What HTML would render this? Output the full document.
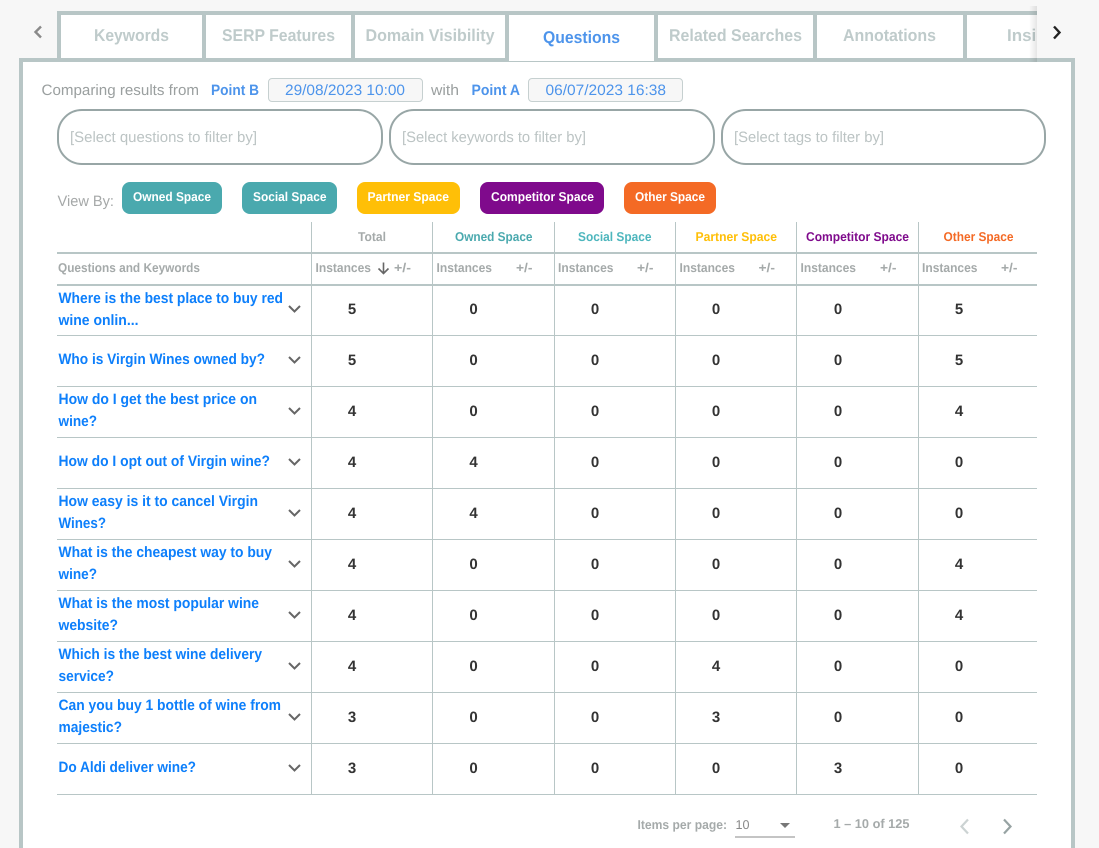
<!DOCTYPE html>
<html><head><meta charset="utf-8"><title>Questions</title>
<style>
html,body{margin:0;padding:0;background:#f7f7f7;width:1099px;height:848px;overflow:hidden}
svg{display:block}
text{font-family:"Liberation Sans",sans-serif;text-rendering:geometricPrecision}
.tab{font-size:17px;font-weight:700;fill:#bfcbcb}
.c{font-size:15px;fill:#9a9f9f}
.b{font-size:15px;font-weight:700;fill:#4d94eb}
.d{font-size:15px;fill:#4d94eb}
.p{font-size:15px;fill:#bcc4c4}
.w{font-size:12.800px;font-weight:700;fill:#fff}
.h{font-size:12.800px;font-weight:700}
.s{font-size:12.800px;font-weight:700;fill:#a5aaaa}
.q{font-size:15px;font-weight:700;fill:#0d7ffb}
.n{font-size:15px;font-weight:700;fill:#333;text-anchor:middle}
.g{font-size:12.800px;font-weight:700;fill:#a5aaaa}
.ln{stroke:#b8c6c6;fill:none}
.ch{stroke:#666;stroke-width:2;fill:none}
</style></head><body>
<svg xmlns="http://www.w3.org/2000/svg" width="1099" height="848" viewBox="0 0 1099 848">
<defs>
<clipPath id="tc"><rect x="57" y="0" width="980" height="62"/></clipPath>
<linearGradient id="sh" x1="0" x2="1" y1="0" y2="0"><stop offset="0" stop-color="#000" stop-opacity="0"/><stop offset="1" stop-color="#000" stop-opacity=".1"/></linearGradient>
</defs>
<rect width="1099" height="848" fill="#f7f7f7"/>
<!-- panel -->
<rect x="21" y="60" width="1052" height="800" fill="#fff" stroke="#b8c6c6" stroke-width="4"/>
<!-- tabs -->
<g clip-path="url(#tc)">
<rect x="57" y="11" width="1020" height="50" fill="#fff"/>
<rect x="57" y="11" width="1020" height="4" fill="#b8c6c6"/>
<rect x="57" y="58" width="452" height="4" fill="#b8c6c6"/>
<rect x="654" y="58" width="420" height="4" fill="#b8c6c6"/>
<rect x="57" y="11" width="4" height="50" fill="#b8c6c6"/>
<rect x="202" y="11" width="4" height="50" fill="#b8c6c6"/>
<rect x="351" y="11" width="4" height="50" fill="#b8c6c6"/>
<rect x="505" y="11" width="4" height="50" fill="#b8c6c6"/>
<rect x="654" y="11" width="4" height="50" fill="#b8c6c6"/>
<rect x="813" y="11" width="4" height="50" fill="#b8c6c6"/>
<rect x="963" y="11" width="4" height="50" fill="#b8c6c6"/>
<text class="tab" x="94" y="41" textLength="75" lengthAdjust="spacingAndGlyphs">Keywords</text>
<text class="tab" x="222" y="41" textLength="113" lengthAdjust="spacingAndGlyphs">SERP Features</text>
<text class="tab" x="365.500" y="41" textLength="129" lengthAdjust="spacingAndGlyphs">Domain Visibility</text>
<text class="tab" x="543" y="43" textLength="77" lengthAdjust="spacingAndGlyphs" style="fill:#4d94eb">Questions</text>
<text class="tab" x="669" y="41" textLength="133" lengthAdjust="spacingAndGlyphs">Related Searches</text>
<text class="tab" x="843" y="41" textLength="93" lengthAdjust="spacingAndGlyphs">Annotations</text>
<text class="tab" x="1007" y="41" textLength="65" lengthAdjust="spacingAndGlyphs">Insights</text>
<rect x="1029" y="6" width="8" height="56" fill="url(#sh)"/>
</g>
<rect x="1037" y="6" width="62" height="52" fill="#f7f7f7"/>
<path d="M41 26.500 L35.500 32 L41 37.500" fill="none" stroke="#8a8a8a" stroke-width="2.400"/>
<path d="M1054 26.500 L1059.500 32.500 L1054 38.500" fill="none" stroke="#222" stroke-width="2.400"/>

<!-- comparing row -->
<text class="c" x="41.500" y="95" textLength="157.500" lengthAdjust="spacingAndGlyphs">Comparing results from</text>
<text class="b" x="211" y="95" textLength="48" lengthAdjust="spacingAndGlyphs">Point B</text>
<rect x="268.500" y="78.500" width="154" height="23" rx="3.500" fill="#f7f7f7" stroke="#c6d0d0"/>
<text class="d" x="285" y="95" textLength="120" lengthAdjust="spacingAndGlyphs">29/08/2023 10:00</text>
<text class="c" x="431" y="95" textLength="28" lengthAdjust="spacingAndGlyphs">with</text>
<text class="b" x="471.500" y="95" textLength="48.500" lengthAdjust="spacingAndGlyphs">Point A</text>
<rect x="528.500" y="78.500" width="154" height="23" rx="3.500" fill="#f7f7f7" stroke="#c6d0d0"/>
<text class="d" x="545.500" y="95" textLength="120.500" lengthAdjust="spacingAndGlyphs">06/07/2023 16:38</text>

<!-- filters -->
<rect x="58" y="110" width="324" height="54" rx="24" fill="#fff" stroke="#98a6a6" stroke-width="2"/>
<rect x="390" y="110" width="324" height="54" rx="24" fill="#fff" stroke="#98a6a6" stroke-width="2"/>
<rect x="722" y="110" width="323" height="54" rx="24" fill="#fff" stroke="#98a6a6" stroke-width="2"/>
<text class="p" x="70" y="142" textLength="187" lengthAdjust="spacingAndGlyphs">[Select questions to filter by]</text>
<text class="p" x="402" y="142" textLength="184" lengthAdjust="spacingAndGlyphs">[Select keywords to filter by]</text>
<text class="p" x="734" y="142" textLength="150" lengthAdjust="spacingAndGlyphs">[Select tags to filter by]</text>

<!-- view by -->
<text class="c" x="57.500" y="206" textLength="56.500" lengthAdjust="spacingAndGlyphs" style="fill:#a5a8a8">View By:</text>
<rect x="122" y="182" width="100" height="32" rx="8" fill="#4aa9ae"/>
<rect x="242" y="182" width="95" height="32" rx="8" fill="#4aa9ae"/>
<rect x="357" y="182" width="103" height="32" rx="8" fill="#ffbf07"/>
<rect x="480" y="182" width="124" height="32" rx="8" fill="#7f0a8c"/>
<rect x="624" y="182" width="92" height="32" rx="8" fill="#f46a25"/>
<text class="w" x="133" y="201" textLength="78" lengthAdjust="spacingAndGlyphs">Owned Space</text>
<text class="w" x="253" y="201" textLength="73.500" lengthAdjust="spacingAndGlyphs">Social Space</text>
<text class="w" x="367.500" y="201" textLength="81.500" lengthAdjust="spacingAndGlyphs">Partner Space</text>
<text class="w" x="491" y="201" textLength="103" lengthAdjust="spacingAndGlyphs">Competitor Space</text>
<text class="w" x="635" y="201" textLength="70" lengthAdjust="spacingAndGlyphs">Other Space</text>

<!-- table grid -->
<g class="ln">
<path d="M311.500 222V795M432.500 222V795M554.500 222V795M675.500 222V795M796.500 222V795M918.500 222V795"/>
<path stroke-width="2" d="M57 253H1037M57 285H1037"/>
<path d="M57 335.500H1037M57 386.500H1037M57 437.500H1037M57 488.500H1037M57 539.500H1037M57 590.500H1037M57 641.500H1037M57 692.500H1037M57 743.500H1037M57 794.500H1037"/>
</g>

<!-- header -->
<text class="h" x="358" y="241" textLength="28" lengthAdjust="spacingAndGlyphs" style="fill:#a5aaaa">Total</text>
<text class="h" x="455" y="241" textLength="77.500" lengthAdjust="spacingAndGlyphs" style="fill:#4aa9ae">Owned Space</text>
<text class="h" x="578" y="241" textLength="73.500" lengthAdjust="spacingAndGlyphs" style="fill:#4db6bd">Social Space</text>
<text class="h" x="695.500" y="241" textLength="81.500" lengthAdjust="spacingAndGlyphs" style="fill:#ffbf07">Partner Space</text>
<text class="h" x="806" y="241" textLength="103" lengthAdjust="spacingAndGlyphs" style="fill:#7f0a8c">Competitor Space</text>
<text class="h" x="943.500" y="241" textLength="70" lengthAdjust="spacingAndGlyphs" style="fill:#f46a25">Other Space</text>

<text class="s" x="58" y="272" textLength="142" lengthAdjust="spacingAndGlyphs">Questions and Keywords</text>
<text class="s" x="315.500" y="272" textLength="55.500" lengthAdjust="spacingAndGlyphs">Instances</text>
<path d="M383.500 262.500V273.500M378.500 268.500L383.500 273.500L388.500 268.500" fill="none" stroke="#666" stroke-width="1.600"/>
<text class="s" x="394" y="272" textLength="17" lengthAdjust="spacingAndGlyphs">+/-</text>
<text class="s" x="436.500" y="272" textLength="55.500" lengthAdjust="spacingAndGlyphs">Instances</text>
<text class="s" x="516" y="272" textLength="16.500" lengthAdjust="spacingAndGlyphs">+/-</text>
<text class="s" x="558" y="272" textLength="55.500" lengthAdjust="spacingAndGlyphs">Instances</text>
<text class="s" x="637" y="272" textLength="16.500" lengthAdjust="spacingAndGlyphs">+/-</text>
<text class="s" x="679.500" y="272" textLength="55.500" lengthAdjust="spacingAndGlyphs">Instances</text>
<text class="s" x="758.500" y="272" textLength="16.500" lengthAdjust="spacingAndGlyphs">+/-</text>
<text class="s" x="800.500" y="272" textLength="55.500" lengthAdjust="spacingAndGlyphs">Instances</text>
<text class="s" x="880" y="272" textLength="16.500" lengthAdjust="spacingAndGlyphs">+/-</text>
<text class="s" x="922" y="272" textLength="55.500" lengthAdjust="spacingAndGlyphs">Instances</text>
<text class="s" x="1001" y="272" textLength="16.500" lengthAdjust="spacingAndGlyphs">+/-</text>

<!-- questions -->
<text class="q" x="58.500" y="303" textLength="224.500" lengthAdjust="spacingAndGlyphs">Where is the best place to buy red</text>
<text class="q" x="58.500" y="325" textLength="80" lengthAdjust="spacingAndGlyphs">wine onlin...</text>
<text class="q" x="58.500" y="364" textLength="206.500" lengthAdjust="spacingAndGlyphs">Who is Virgin Wines owned by?</text>
<text class="q" x="58.500" y="404" textLength="198.500" lengthAdjust="spacingAndGlyphs">How do I get the best price on</text>
<text class="q" x="58.500" y="426" textLength="38.500" lengthAdjust="spacingAndGlyphs">wine?</text>
<text class="q" x="58.500" y="466" textLength="211.500" lengthAdjust="spacingAndGlyphs">How do I opt out of Virgin wine?</text>
<text class="q" x="58.500" y="506" textLength="199.500" lengthAdjust="spacingAndGlyphs">How easy is it to cancel Virgin</text>
<text class="q" x="58.500" y="528" textLength="47.500" lengthAdjust="spacingAndGlyphs">Wines?</text>
<text class="q" x="58.500" y="557" textLength="213.500" lengthAdjust="spacingAndGlyphs">What is the cheapest way to buy</text>
<text class="q" x="58.500" y="579" textLength="38.500" lengthAdjust="spacingAndGlyphs">wine?</text>
<text class="q" x="58.500" y="608" textLength="200.500" lengthAdjust="spacingAndGlyphs">What is the most popular wine</text>
<text class="q" x="58.500" y="630" textLength="59.500" lengthAdjust="spacingAndGlyphs">website?</text>
<text class="q" x="58.500" y="659" textLength="203.500" lengthAdjust="spacingAndGlyphs">Which is the best wine delivery</text>
<text class="q" x="58.500" y="681" textLength="55.500" lengthAdjust="spacingAndGlyphs">service?</text>
<text class="q" x="58.500" y="710" textLength="222.500" lengthAdjust="spacingAndGlyphs">Can you buy 1 bottle of wine from</text>
<text class="q" x="58.500" y="732" textLength="63.500" lengthAdjust="spacingAndGlyphs">majestic?</text>
<text class="q" x="58.500" y="772" textLength="137.500" lengthAdjust="spacingAndGlyphs">Do Aldi deliver wine?</text>

<!-- row chevrons -->
<g class="ch">
<path d="M289 306L294.500 311.500L300 306"/>
<path d="M289 357L294.500 362.500L300 357"/>
<path d="M289 408L294.500 413.500L300 408"/>
<path d="M289 459L294.500 464.500L300 459"/>
<path d="M289 510L294.500 515.500L300 510"/>
<path d="M289 561L294.500 566.500L300 561"/>
<path d="M289 612L294.500 617.500L300 612"/>
<path d="M289 663L294.500 668.500L300 663"/>
<path d="M289 714L294.500 719.500L300 714"/>
<path d="M289 765L294.500 770.500L300 765"/>
</g>

<!-- numbers -->
<g>
<text class="n" x="352" y="314">5</text><text class="n" x="473.500" y="314">0</text><text class="n" x="595" y="314">0</text><text class="n" x="716" y="314">0</text><text class="n" x="838" y="314">0</text><text class="n" x="959" y="314">5</text>
<text class="n" x="352" y="365">5</text><text class="n" x="473.500" y="365">0</text><text class="n" x="595" y="365">0</text><text class="n" x="716" y="365">0</text><text class="n" x="838" y="365">0</text><text class="n" x="959" y="365">5</text>
<text class="n" x="352" y="416">4</text><text class="n" x="473.500" y="416">0</text><text class="n" x="595" y="416">0</text><text class="n" x="716" y="416">0</text><text class="n" x="838" y="416">0</text><text class="n" x="959" y="416">4</text>
<text class="n" x="352" y="467">4</text><text class="n" x="473.500" y="467">4</text><text class="n" x="595" y="467">0</text><text class="n" x="716" y="467">0</text><text class="n" x="838" y="467">0</text><text class="n" x="959" y="467">0</text>
<text class="n" x="352" y="518">4</text><text class="n" x="473.500" y="518">4</text><text class="n" x="595" y="518">0</text><text class="n" x="716" y="518">0</text><text class="n" x="838" y="518">0</text><text class="n" x="959" y="518">0</text>
<text class="n" x="352" y="569">4</text><text class="n" x="473.500" y="569">0</text><text class="n" x="595" y="569">0</text><text class="n" x="716" y="569">0</text><text class="n" x="838" y="569">0</text><text class="n" x="959" y="569">4</text>
<text class="n" x="352" y="620">4</text><text class="n" x="473.500" y="620">0</text><text class="n" x="595" y="620">0</text><text class="n" x="716" y="620">0</text><text class="n" x="838" y="620">0</text><text class="n" x="959" y="620">4</text>
<text class="n" x="352" y="671">4</text><text class="n" x="473.500" y="671">0</text><text class="n" x="595" y="671">0</text><text class="n" x="716" y="671">4</text><text class="n" x="838" y="671">0</text><text class="n" x="959" y="671">0</text>
<text class="n" x="352" y="722">3</text><text class="n" x="473.500" y="722">0</text><text class="n" x="595" y="722">0</text><text class="n" x="716" y="722">3</text><text class="n" x="838" y="722">0</text><text class="n" x="959" y="722">0</text>
<text class="n" x="352" y="773">3</text><text class="n" x="473.500" y="773">0</text><text class="n" x="595" y="773">0</text><text class="n" x="716" y="773">0</text><text class="n" x="838" y="773">3</text><text class="n" x="959" y="773">0</text>
</g>

<!-- pagination -->
<text class="g" x="637.500" y="829" textLength="89.500" lengthAdjust="spacingAndGlyphs">Items per page:</text>
<text class="g" x="735.500" y="829" textLength="14" lengthAdjust="spacingAndGlyphs" style="font-weight:400;fill:#888">10</text>
<path d="M780 823H790L785 828Z" fill="#777"/>
<path d="M735 837H795" stroke="#888" stroke-width="1"/>
<text class="g" x="833.500" y="828" textLength="76" lengthAdjust="spacingAndGlyphs">1 – 10 of 125</text>
<path d="M968 819.500L961.500 826.500L968 833.500" fill="none" stroke="#ccd3d3" stroke-width="2.200"/>
<path d="M1004 819.500L1010.500 826.500L1004 833.500" fill="none" stroke="#97a3a3" stroke-width="2.200"/>
</svg>
</body></html>
